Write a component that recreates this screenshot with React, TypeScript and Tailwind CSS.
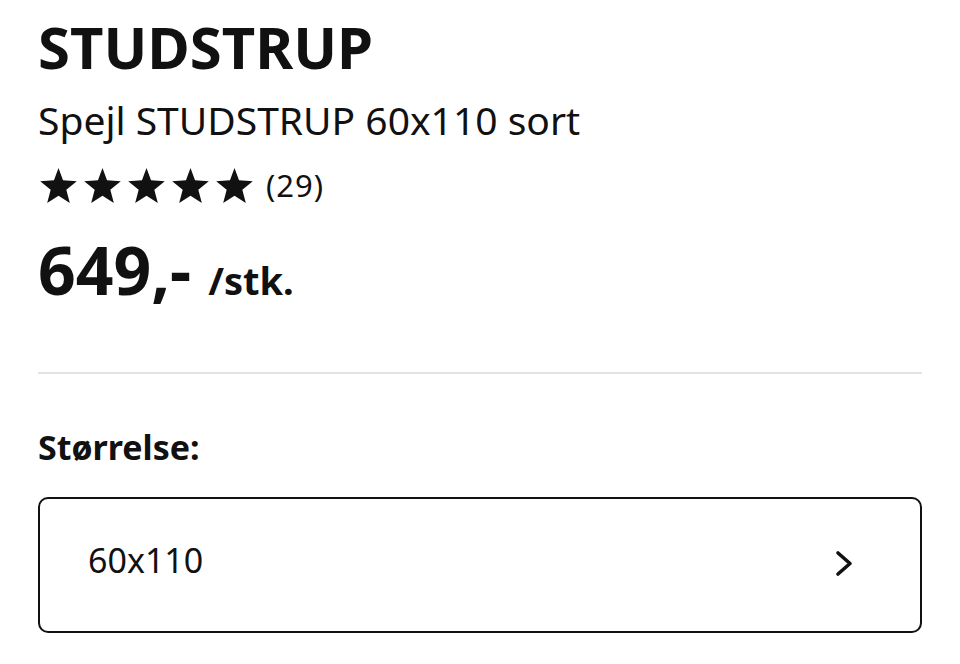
const Star = () => (
  <svg width="37" height="35" viewBox="1.5 1.5 21 20.1" className="shrink-0">
    <polygon
      points="12,1.5 14.6,8.5 22.5,9.1 16.5,14 18.5,21.6 12,17.5 5.5,21.6 7.5,14 1.5,9.1 9.4,8.5"
      fill="#111111"
    />
  </svg>
);

const App = () => {
  return (
    <div className="w-[960px] h-[664px] bg-white px-[38px] text-[#111111] font-['Noto_Sans',sans-serif] overflow-hidden">
      <h1 className="mt-[18px] text-[58px] leading-none font-bold">STUDSTRUP</h1>
      <p className="mt-[24px] text-[39px] leading-none">Spejl STUDSTRUP 60x110 sort</p>

      <div className="mt-[28px] flex items-center h-[36px]">
        <div className="flex items-center gap-[7px] pl-[2px]">
          <Star />
          <Star />
          <Star />
          <Star />
          <Star />
        </div>
        <span className="ml-[13px] text-[31px] leading-none tracking-[1px]">(29)</span>
      </div>

      <div className="mt-[33px] flex items-baseline">
        <span className="text-[66px] leading-none font-bold">649,-</span>
        <span className="ml-[17px] text-[38px] leading-none font-bold">/stk.</span>
      </div>

      <hr className="mt-[70px] border-0 h-[2px] bg-[#e3e3e3]" />

      <h2 className="mt-[56px] text-[34px] leading-none font-bold">Størrelse:</h2>

      <button className="mt-[33px] w-full h-[136px] flex items-center justify-between border-2 border-[#111111] rounded-[10px] pl-[48px] pr-[67px]">
        <span className="mb-[10px] text-[34px] leading-none">60x110</span>
        <svg width="18" height="27" viewBox="0 0 18 27" fill="none" className="mb-[4px]">
          <path
            d="M3 3 L15 13.5 L3 24"
            stroke="#111111"
            strokeWidth="3.6"
            strokeLinecap="round"
            strokeLinejoin="round"
          />
        </svg>
      </button>
    </div>
  );
};

export default App;
